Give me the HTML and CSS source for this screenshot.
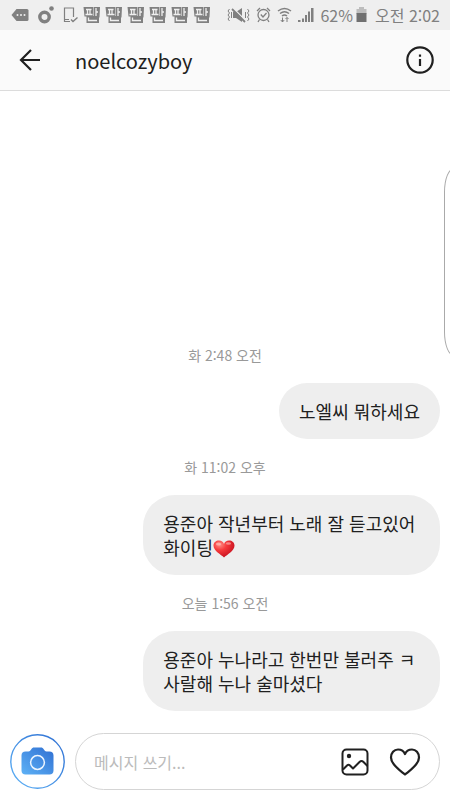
FILE: index.html
```html
<!DOCTYPE html>
<html lang="ko">
<head>
<meta charset="utf-8">
<meta name="viewport" content="width=device-width, initial-scale=1">
<title>noelcozyboy</title>
<link rel="stylesheet" href="styles.css">
</head>
<body>
<svg class="defs" aria-hidden="true">
  <defs>
    <symbol id="pan" viewBox="0 0 18 18">
      <path d="M0.500 1H10.500L10 10.500H1.500ZM11 1H17L16.500 11.500H10.500ZM3.500 10H16V17H3.500Z" fill="#808080"/>
      <path d="M3 3.500H8.500M4.500 3.500V8M7 3.500V8M2.500 8.500H9.500M13 2V10M13 6H15M5.500 11.500V14.500H14" fill="none" stroke="#efefef" stroke-width="1.300"/>
    </symbol>
    <linearGradient id="blue" x1="0" y1="1" x2="1" y2="0">
      <stop offset="0" stop-color="#5eb2f6"/>
      <stop offset="1" stop-color="#2f6fd2"/>
    </linearGradient>
    <radialGradient id="red" cx=".3" cy=".25" r=".8">
      <stop offset="0" stop-color="#ff8d86"/>
      <stop offset=".4" stop-color="#f63a3c"/>
      <stop offset="1" stop-color="#c40f1e"/>
    </radialGradient>
  </defs>
</svg>

<div class="status">
  <div class="notices">
    <svg width="18" height="14" viewBox="0 0 18 14"><path d="M5.500 1H16Q17.500 1 17.500 2.500V11.500Q17.500 13 16 13H5.500L0.500 7Z" fill="#808080"/><g fill="#efefef"><circle cx="6.500" cy="7" r="1"/><circle cx="10" cy="7" r="1"/><circle cx="13.500" cy="7" r="1"/></g></svg>
    <svg width="16" height="18" viewBox="0 0 16 18"><circle cx="6.500" cy="11" r="4.700" fill="none" stroke="#808080" stroke-width="3.400"/><circle cx="13.500" cy="2.500" r="2.300" fill="#808080"/></svg>
    <svg width="16" height="16" viewBox="0 0 16 16" fill="none" stroke="#808080"><path d="M10.500 10V1H1.500V14.500H7M1.500 12.500H6" stroke-width="1.200"/><path d="M8 12.500L10 14.500L14.500 10.500" stroke-width="1.400"/></svg>
    <svg width="18" height="18"><use href="#pan"/></svg>
    <svg width="18" height="18"><use href="#pan"/></svg>
    <svg width="18" height="18"><use href="#pan"/></svg>
    <svg width="18" height="18"><use href="#pan"/></svg>
    <svg width="18" height="18"><use href="#pan"/></svg>
    <svg width="18" height="18"><use href="#pan"/></svg>
  </div>
  <div class="system">
    <svg width="23" height="16" viewBox="0 0 23 16"><path d="M6 5H9L15 1V15L9 11H6Z" fill="#808080"/><path d="M6 1L19 14" stroke="#efefef" stroke-width="1.500"/><path d="M5 2L18 15" stroke="#808080" stroke-width="1.800"/><path d="M2.500 2L1 4L2.500 6L1 8L2.500 10L1 12L2.500 14M4.500 5V11M20.500 2L22 4L20.500 6L22 8L20.500 10L22 12L20.500 14M18.500 5V11" fill="none" stroke="#808080"/></svg>
    <svg width="15" height="16" viewBox="0 0 15 16" fill="none" stroke="#808080" stroke-width="1.300"><circle cx="7.500" cy="8" r="5.500"/><path d="M1 4L4 1M14 4L11 1M3.500 12.500L2 15M11.500 12.500L13 15M4.800 7.500L7 10L10.500 6"/></svg>
    <svg width="15" height="16" viewBox="0 0 15 16" fill="none" stroke="#808080" stroke-width="1.500"><path d="M1 4Q7.500 -1 14 4M3 6.500Q7.500 3 12 6.500M5 9Q7.500 7 10 9"/><path d="M5.500 10.500V15M3.800 13L5.500 15L7.200 13M10 15V10.500M8.500 12L10 10.500L11.500 12" stroke-width="1"/></svg>
    <svg width="16" height="16" viewBox="0 0 16 16" fill="#808080"><path d="M0 13H2.500V15H0ZM4 11.500H6V15H4ZM7 8H9V15H7ZM10 4.500H12V15H10ZM13 1H15.500V15H13Z"/></svg>
    <span class="charge">62%<svg width="11" height="16" viewBox="0 0 11 16"><path d="M3 0H8V2H10.500V7H.500V2H3Z" fill="#bdbdbd"/><path d="M.500 6H10.500V15H.500Z" fill="#707070"/></svg></span>
    <time>오전 2:02</time>
  </div>
</div>

<header class="bar">
  <button class="icon" type="button" aria-label="뒤로">
    <svg width="22" height="22" viewBox="0 0 22 22" fill="none" stroke="#202020" stroke-width="2.200"><path d="M12 1L2 11L12 21M2 11H21"/></svg>
  </button>
  <h1>noelcozyboy</h1>
  <button class="icon" type="button" aria-label="정보">
    <svg width="28" height="28" viewBox="0 0 28 28"><circle cx="14" cy="14" r="12.700" fill="none" stroke="#202020" stroke-width="2.200"/><path d="M12.900 8.500H15.100V10.700H12.900ZM12.900 13H15.100V20H12.900Z" fill="#202020"/></svg>
  </button>
</header>

<main class="chat">
  <time class="stamp">화 2:48 오전</time>
  <p class="bubble">노엘씨 뭐하세요</p>
  <time class="stamp">화 11:02 오후</time>
  <p class="bubble">용준아 작년부터 노래 잘 듣고있어 화이팅<svg class="heart" width="22" height="18" viewBox="0 0 22 18" role="img" aria-label="하트"><path d="M11 17.500C8 14.500 .500 11 .500 5.500C.500 2.500 3 .500 6 .500C8.500 .500 10.300 1.800 11 4C11.700 1.800 13.500 .500 16 .500C19 .500 21.500 2.500 21.500 5.500C21.500 11 14 14.500 11 17.500Z" fill="url(#red)"/><ellipse cx="5.500" cy="4" rx="2.600" ry="1.500" fill="#ffc0bb" opacity=".7"/><ellipse cx="15.500" cy="3.500" rx="2.600" ry="1.300" fill="#ffc0bb" opacity=".6"/></svg></p>
  <time class="stamp">오늘 1:56 오전</time>
  <p class="bubble">용준아 누나라고 한번만 불러주 ㅋ 사랄해 누나 술마셨다</p>
</main>

<form class="composer">
  <button class="camera" type="button" aria-label="카메라">
    <svg width="55" height="55" viewBox="0 0 55 55"><circle cx="27.500" cy="27.500" r="26.700" fill="#fff" stroke="url(#blue)" stroke-width="1.400"/><path d="M15.500 17.500H18.500C20 17.500 20.500 16.500 21.300 15.300C22 14 22.800 13.500 24 13.500H31C32.200 13.500 33 14 33.700 15.300C34.500 16.500 35 17.500 36.500 17.500H39.500C42 17.500 43.500 19 43.500 21.500V36.500C43.500 39 42 40.500 39.500 40.500H15.500C13 40.500 11.500 39 11.500 36.500V21.500C11.500 19 13 17.500 15.500 17.500Z" fill="url(#blue)"/><circle cx="27.500" cy="28.500" r="6.900" fill="none" stroke="#eef6ff" stroke-width="1.500"/></svg>
  </button>
  <div class="field">
    <input type="text" aria-label="메시지" placeholder="메시지 쓰기...">
    <button class="icon" type="button" aria-label="사진">
      <svg width="28" height="28" viewBox="0 0 28 28" fill="none" stroke="#202020" stroke-width="2"><rect x="1.500" y="1.500" width="25" height="25" rx="4"/><path d="M2 21.500L6 17.500Q7.500 16 9 17.500L12 20.500L18.500 14Q20.500 12 22.500 14L26.500 18" stroke-linejoin="round"/><circle cx="8" cy="8" r="2.200" fill="#202020" stroke="none"/></svg>
    </button>
    <button class="icon" type="button" aria-label="좋아요">
      <svg width="32" height="28" viewBox="0 0 32 28" fill="none" stroke="#202020" stroke-width="2.200" stroke-linejoin="round"><path d="M16 26.500C12 23 2 17 2 9.500C2 5 5 1.500 9 1.500C12.500 1.500 15 3.500 16 6C17 3.500 19.500 1.500 23 1.500C27 1.500 30 5 30 9.500C30 17 20 23 16 26.500Z"/></svg>
    </button>
  </div>
</form>
<div class="edge-handle"></div>
</body>
</html>
```
FILE: styles.css
```css
* {
  box-sizing: border-box;
}

body {
  position: relative;
  display: flex;
  flex-direction: column;
  min-height: 100vh;
  margin: 0;
  overflow-x: hidden;
  background: #fff;
  color: #202020;
  font-family: "Noto Sans CJK KR", sans-serif;
}

svg {
  display: block;
  flex: none;
}

.defs {
  position: absolute;
  width: 0;
  height: 0;
}

button {
  padding: 0;
  border: 0;
  background: none;
  cursor: pointer;
}

.status {
  display: flex;
  align-items: center;
  justify-content: space-between;
  height: 30px;
  padding: 0 10px 0 11px;
  background: #efefef;
  color: #808080;
  font-size: 16px;
}

.notices {
  display: flex;
  align-items: center;
  gap: 4px;
}

.notices svg:nth-child(-n+2) {
  margin-right: 5px;
}

.system {
  display: flex;
  align-items: center;
  gap: 6px;
  white-space: nowrap;
}

.charge {
  display: flex;
  align-items: center;
  gap: 3px;
  margin-right: 2px;
}

.bar {
  display: flex;
  align-items: center;
  height: 61px;
  padding: 0 16px 0 19px;
  border-bottom: 1px solid #dcdcdc;
  background: #fafafa;
}

.bar h1 {
  flex: 1;
  margin: 0 0 0 34px;
  font-size: 20px;
  font-weight: 400;
}

.chat {
  display: flex;
  flex: 1;
  flex-direction: column;
  justify-content: flex-end;
  padding: 20px 10px 22px;
}

.stamp {
  align-self: center;
  color: #999;
  font-size: 14px;
  line-height: 20px;
}

.bubble {
  align-self: flex-end;
  max-width: 69%;
  margin: 18px 0;
  padding: 16px 20px;
  border-radius: 32px;
  background: #eee;
  font-size: 18px;
  line-height: 24px;
}

.bubble:last-child {
  margin-bottom: 0;
}

.heart {
  display: inline-block;
  vertical-align: -3px;
}

.composer {
  display: flex;
  align-items: center;
  gap: 10px;
  padding: 0 10px 10px;
}

.field {
  display: flex;
  flex: 1;
  align-items: center;
  gap: 20px;
  min-width: 0;
  height: 57px;
  padding: 0 18px;
  border: 1px solid #d5d5d5;
  border-radius: 29px;
}

.field input {
  flex: 1;
  min-width: 0;
  padding: 0;
  border: 0;
  outline: 0;
  background: none;
  color: #202020;
  font: inherit;
  font-size: 16px;
}

.field input::placeholder {
  color: #bbb;
}

.edge-handle {
  position: absolute;
  top: 168px;
  right: -14px;
  width: 20px;
  height: 188px;
  border: 1px solid #aaa;
  border-radius: 10px / 24px;
}
```
